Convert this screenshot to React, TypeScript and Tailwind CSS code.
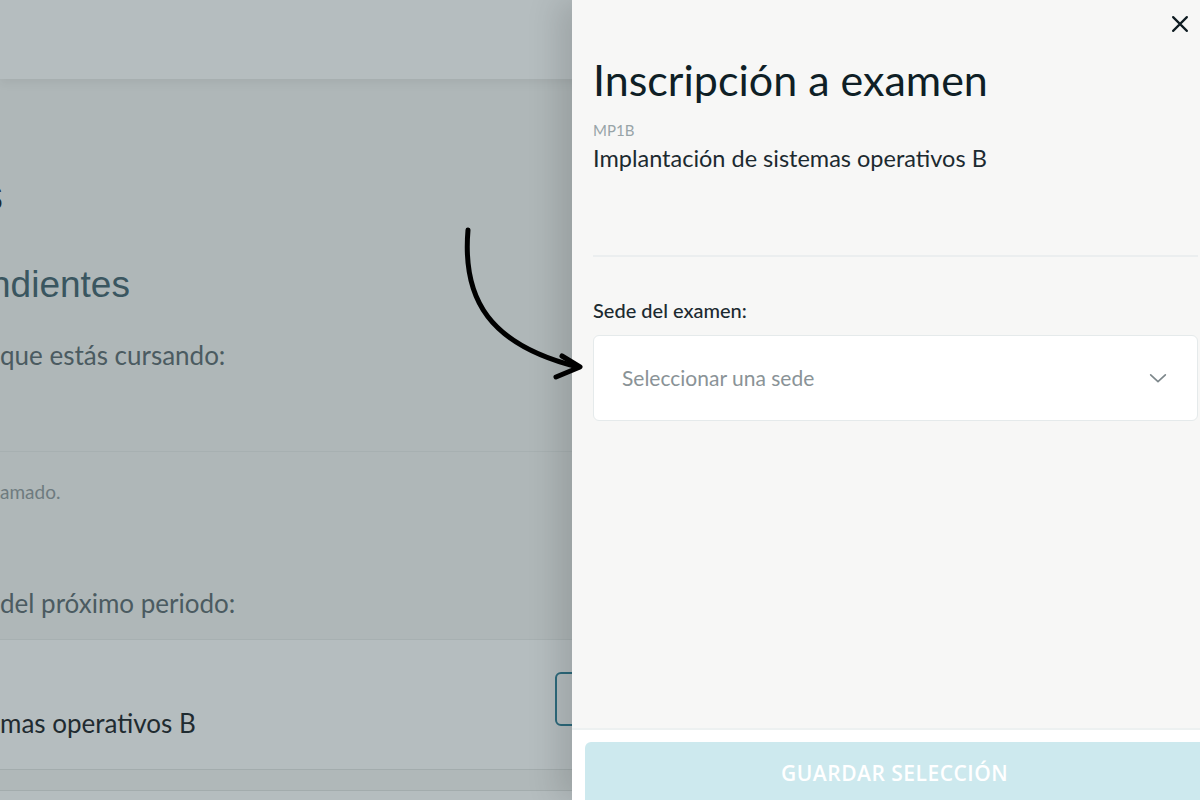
import React from "react";

export default function App() {
  const sans = { fontFamily: "'Liberation Sans', Arial, sans-serif" };
  return (
    <div className="relative w-[1200px] h-[800px] overflow-hidden bg-[#afb7b8]" style={{ fontFamily: "Lato, 'Noto Sans', sans-serif" }}>
      {/* Background page (dimmed) */}
      <div className="absolute inset-0 flex flex-col">
        <div className="h-[79px] shrink-0 bg-[#b5bdbf] shadow-[0_4px_10px_rgba(0,0,0,0.06)] relative z-10" />
        <div className="flex flex-col">
          <div className="h-[91px]" />
          <div className="h-[50px] flex items-center text-[44px] text-[#1d2a30] -ml-[19px]" style={sans}>s</div>
          <div className="h-[42px]" />
          <div className="h-[46px] flex items-center text-[37px] text-[#3a5660] -ml-[10px]" style={sans}>ndientes</div>
          <div className="h-[32px]" />
          <div className="h-[30px] flex items-center text-[26px] text-[#4b5b61]">que estás cursando:</div>
          <div className="h-[81px]" />
          <div className="h-px bg-[#a7b0b1]" />
          <div className="h-[28px]" />
          <div className="h-[24px] flex items-center text-[19px] text-[#6e7b7f]">amado.</div>
          <div className="h-[84px]" />
          <div className="h-[30px] flex items-center text-[26px] text-[#4b5b61]">del próximo periodo:</div>
          <div className="h-[21px]" />
          <div className="h-px bg-[#a7b0b1]" />
          <div className="h-[129px] bg-[#b5bdbf] flex items-end pb-[31px] relative">
            <span className="h-[30px] flex items-center text-[26px] text-[#1f2b30]">mas operativos B</span>
            <div className="absolute left-[555px] top-[32px] w-[60px] h-[54px] border-2 border-[#2d6a7c] rounded-[6px]" />
          </div>
          <div className="h-px bg-[#a3acad]" />
          <div className="h-[20px] bg-[#b0b8b9]" />
          <div className="h-px bg-[#a3acad]" />
          <div className="h-[40px] bg-[#b5bdbf]" />
        </div>
      </div>

      {/* Side panel */}
      <div className="absolute top-0 left-[572px] w-[640px] h-[800px] bg-[#f7f7f6] shadow-[-14px_0_30px_rgba(0,0,0,0.13)] flex flex-col z-20">
        <div className="flex-1 flex flex-col pl-[21px] pr-[14px]">
          <div className="flex justify-end pt-[13px] pr-[7px] h-[48px]">
            <svg width="22" height="22" viewBox="0 0 24 24" fill="none" stroke="#0f1c22" strokeWidth="2.4" strokeLinecap="round">
              <path d="M4.5 4.5l15 15M19.5 4.5l-15 15" />
            </svg>
          </div>
          <h1 className="mt-[8px] text-[43px] leading-[48px] text-[#0f1f26] font-normal">Inscripción a examen</h1>
          <div className="mt-[17px] text-[15px] leading-[18px] text-[#98a4a8]">MP1B</div>
          <div className="mt-[5px] text-[23.5px] leading-[28px] text-[#1c2a30]">Implantación de sistemas operativos B</div>
          <div className="mt-[83px] h-[2px] bg-[#ebeeef]" />
          <div className="mt-[41px] text-[20px] leading-[24px] text-[#1c2a30] font-medium">Sede del examen:</div>
          <div className="mt-[13px] w-[605px] h-[86px] bg-white border border-[#e5eaeb] rounded-[6px] flex items-center justify-between pl-[28px] pr-[28px]">
            <span className="text-[21px] text-[#8a9397]">Seleccionar una sede</span>
            <svg width="22" height="22" viewBox="0 0 24 24" fill="none" stroke="#7d878b" strokeWidth="1.8" strokeLinecap="round" strokeLinejoin="round">
              <path d="M4 8.5l8 7.5 8-7.5" />
            </svg>
          </div>
        </div>
        <div className="h-[72px] bg-white border-t-2 border-[#edf1f1] pt-[12px] pl-[13px]">
          <button className="w-[640px] h-[70px] rounded-[6px] bg-[#cde9ee] text-white text-[21px] font-semibold tracking-[0.5px] flex items-start justify-start pt-[16px] pl-[196px]" style={{ fontFamily: "'Open Sans', sans-serif" }}>
            GUARDAR SELECCIÓN
          </button>
        </div>
      </div>

      {/* Hand-drawn arrow */}
      <svg className="absolute left-0 top-0 z-30 pointer-events-none" width="1200" height="800" viewBox="0 0 1200 800" fill="none">
        <path d="M468 230 C 462 300, 490 345, 578 367" stroke="#000" strokeWidth="5" strokeLinecap="round" />
        <path d="M562 356 L 580 367 L 556 377" stroke="#000" strokeWidth="5" strokeLinecap="round" strokeLinejoin="round" />
      </svg>
    </div>
  );
}
